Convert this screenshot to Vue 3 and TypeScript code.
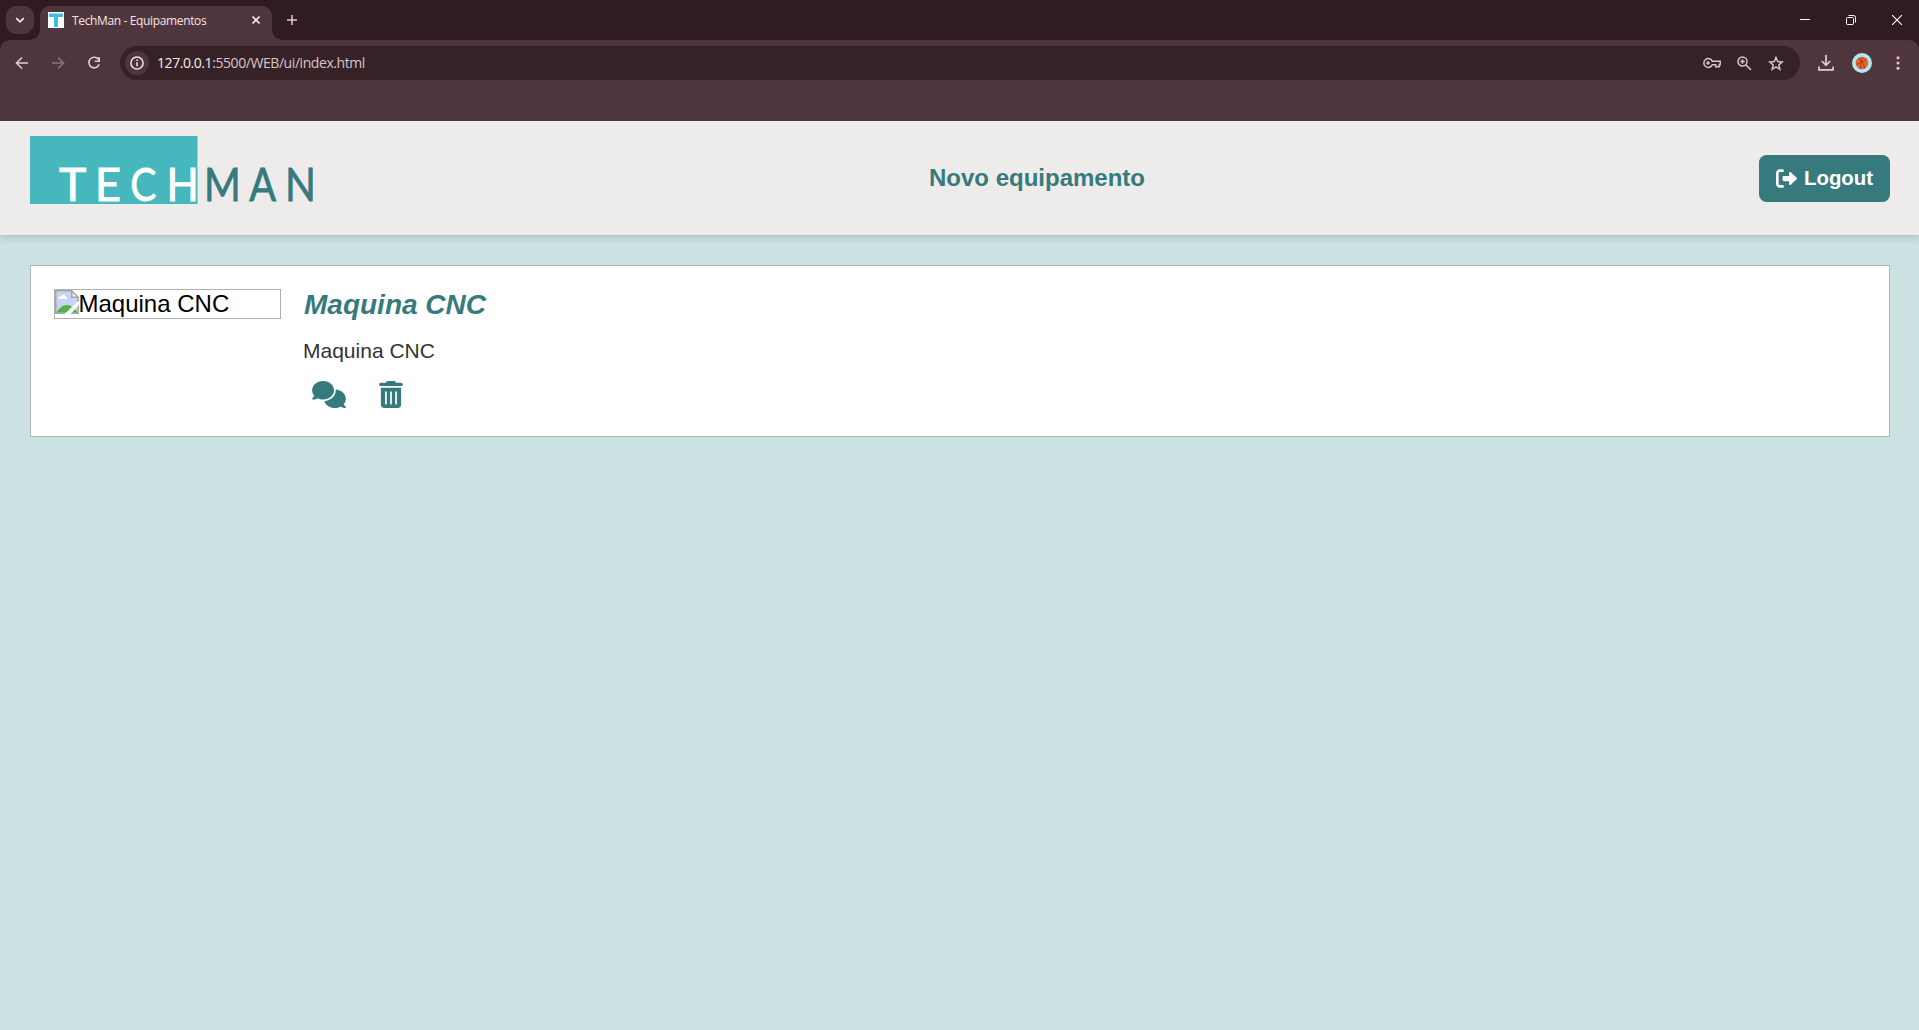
<script setup lang="ts">
interface Equipment {
  id: number
  name: string
  description: string
}

interface LogoGlyph {
  char: string
  x: number
  scale: number
  dark: boolean
}

const equipments: Equipment[] = [
  { id: 1, name: 'Maquina CNC', description: 'Maquina CNC' },
]

const logoGlyphs: LogoGlyph[] = [
  { char: 'T', x: 29.1, scale: 1.02, dark: false },
  { char: 'E', x: 64.7, scale: 1, dark: false },
  { char: 'C', x: 100.3, scale: 0.86, dark: false },
  { char: 'H', x: 136.4, scale: 0.93, dark: false },
  { char: 'M', x: 174, scale: 0.87, dark: true },
  { char: 'A', x: 219.2, scale: 0.87, dark: true },
  { char: 'N', x: 255.1, scale: 0.89, dark: true },
]
</script>

<template>
  <div class="screen">
    <div class="tabstrip">
      <button class="tab-search" aria-label="tabs">
        <svg width="10" height="8" viewBox="0 0 10 8"><path d="M1.200 2.200 5 5.800 8.800 2.200" fill="none" stroke="#f3e3e7" stroke-width="1.8" /></svg>
      </button>
      <div class="tab">
        <svg class="favicon" width="16" height="16" viewBox="0 0 16 16">
          <rect width="16" height="16" fill="#fff" />
          <rect x="1" y="1.500" width="14" height="3.500" fill="#42bde6" />
          <rect x="6" y="2" width="4" height="13" fill="#42bde6" />
        </svg>
        <span class="tab-title">TechMan - Equipamentos</span>
        <svg class="tab-close" width="8" height="8" viewBox="0 0 8 8"><path d="M.5.5 7.500 7.500M7.500.5.5 7.500" stroke="#f3e3e7" stroke-width="1.6" /></svg>
      </div>
      <svg class="new-tab" width="10" height="10" viewBox="0 0 10 10"><path d="M5 0V10M0 5H10" stroke="#e8c8d0" stroke-width="1.5" /></svg>
      <div class="window-controls">
        <svg width="10" height="10" viewBox="0 0 10 10"><path d="M0 4.500H10" stroke="#fff" /></svg>
        <svg width="10" height="10" viewBox="0 0 10 10" fill="none" stroke="#fff"><rect x=".5" y="2.500" width="7" height="7" rx="1" /><path d="M2.500.5H7.500Q9.500.5 9.500 2.500V7.500" /></svg>
        <svg width="10" height="10" viewBox="0 0 10 10"><path d="M0 0 10 10M10 0 0 10" stroke="#fff" stroke-width="1.1" /></svg>
      </div>
    </div>

    <div class="toolbar">
      <div class="nav-row">
        <svg class="nav-icon" viewBox="0 0 16 16"><path d="M14 8H3M8 2.500 2.500 8 8 13.500" /></svg>
        <svg class="nav-icon muted" viewBox="0 0 16 16"><path d="M2 8H13M8 2.500 13.500 8 8 13.500" /></svg>
        <svg class="nav-icon" viewBox="0 0 16 16"><path d="M12.700 4.700A5.300 5.300 0 1 0 13.200 9.300M13.200 2V6.200H8.700" /></svg>
        <div class="omnibox">
          <span class="site-info">
            <svg width="14" height="14" viewBox="0 0 14 14"><circle cx="7" cy="7" r="6.100" fill="none" stroke="#f3e3e7" stroke-width="1.500" /><path d="M7 6.200V10.300M7 3.600V5" stroke="#f3e3e7" stroke-width="1.500" /></svg>
          </span>
          <span class="url"><b>127.0.0.1</b>:5500/WEB/ui/index.html</span>
          <div class="omni-icons">
            <svg width="18" height="12" viewBox="0 0 18 12" fill="none" stroke="#d9c3c9" stroke-width="1.500"><path d="M9.300 4.300H17.200V7.700H16.300V9.700H12.700V7.700H9.300A4.400 4.400 0 1 1 9.300 4.300Z" /><circle cx="5" cy="6" r="1.700" fill="#d9c3c9" stroke="none" /></svg>
            <svg width="15" height="15" viewBox="0 0 15 15" fill="none" stroke="#d9c3c9" stroke-width="1.500"><circle cx="5.500" cy="5.500" r="4.500" /><path d="M9 9 14 14M5.500 3.300V7.700M3.300 5.500H7.700" /></svg>
            <svg width="16" height="15" viewBox="0 0 16 15" fill="none" stroke="#d9c3c9" stroke-width="1.500"><path d="M8 1.500 9.700 5.600 14.200 6 10.800 8.900 11.900 13.300 8 10.900 4.100 13.300 5.200 8.900 1.800 6 6.300 5.600Z" /></svg>
          </div>
        </div>
        <svg class="download" width="16" height="16" viewBox="0 0 16 16" fill="none" stroke="#e8c8d0" stroke-width="1.700"><path d="M8 0V10M3.800 6 8 10.200 12.200 6M.9 11.500V14.900H15.100V11.500" /></svg>
        <svg class="avatar" width="20" height="20" viewBox="0 0 20 20">
          <circle cx="10" cy="10" r="10" fill="#aee9f3" />
          <circle cx="10" cy="10" r="6.300" fill="#f0622b" />
          <path d="M4 11.500Q10 10.500 14.500 5.700M6 5.300Q11.500 8 12.600 15.500M10.500 4Q8 9 8.500 16" fill="none" stroke="#7a3320" stroke-width=".7" />
        </svg>
        <svg class="menu" width="4" height="14" viewBox="0 0 4 14" fill="#e8c8d0"><circle cx="2" cy="1.700" r="1.500" /><circle cx="2" cy="7" r="1.500" /><circle cx="2" cy="12.300" r="1.500" /></svg>
      </div>
    </div>

    <div class="page">
      <header class="header">
        <svg class="logo" width="300" height="84" viewBox="0 0 300 84">
          <rect width="167.500" height="68" fill="#46b7bc" />
          <text
            v-for="g in logoGlyphs"
            :key="g.char"
            :transform="`translate(${g.x} 64.800) scale(${g.scale} 1)`"
            :class="{ dark: g.dark }"
          >{{ g.char }}</text>
        </svg>
        <a class="new-link">Novo equipamento</a>
        <button class="logout">
          <svg width="21" height="21" viewBox="0 0 512 512" fill="#fff"><path d="M160 96c17.700 0 32-14.300 32-32s-14.300-32-32-32H96C43 32 0 75 0 128V384c0 53 43 96 96 96h64c17.700 0 32-14.300 32-32s-14.300-32-32-32H96c-17.700 0-32-14.300-32-32V128c0-17.700 14.300-32 32-32h64zM504.500 273.400c4.800-4.500 7.500-10.800 7.500-17.400s-2.700-12.900-7.500-17.400l-144-136c-7-6.600-17.200-8.400-26-4.600s-14.500 12.500-14.500 22v72H192c-17.700 0-32 14.300-32 32v64c0 17.700 14.300 32 32 32H320v72c0 9.600 5.700 18.200 14.500 22s19 2 26-4.600l144-136z" /></svg>
          <span>Logout</span>
        </button>
      </header>

      <main class="content">
        <article v-for="item in equipments" :key="item.id" class="card">
          <div class="thumb">
            <svg width="24" height="24" viewBox="0 0 24 24">
              <path d="M0 0H17L24 7V24H0Z" fill="#a6a6a6" />
              <path d="M1.500 1.500H16V8H22.500V22.500H1.500Z" fill="#c5d6f5" />
              <path d="M17.500 2.500V6.500H21.500Z" fill="#f4f4f4" />
              <path d="M3.500 9C3.500 6.500 6 6.700 6.300 6.300 7.300 3.800 10.300 4.400 10.500 6.500 12.300 6.700 12.300 9 12 9Z" fill="#fff" />
              <path d="M1.500 22.500C4 18 8 15 12 15S20 18 22.500 22.500Z" fill="#53b043" />
              <path d="M9.500 24 24 10.500V15L15.500 24Z" fill="#fff" />
            </svg>
            <span>{{ item.name }}</span>
          </div>
          <div class="info">
            <h2>{{ item.name }}</h2>
            <p>{{ item.description }}</p>
            <div class="actions">
              <svg width="34" height="27" viewBox="0 0 640 512"><path d="M208 352c114.900 0 208-78.800 208-176S322.900 0 208 0S0 78.800 0 176c0 38.600 14.700 74.300 39.600 103.400c-3.500 9.400-8.700 17.700-14.200 24.700c-4.800 6.200-9.700 11-13.300 14.300c-1.800 1.600-3.300 2.900-4.300 3.700c-.5 .4-.9 .7-1.100 .8l-.2 .2C1 327.200-1.400 334.400 .8 340.900S9.100 352 16 352c21.800 0 43.800-5.600 62.100-12.500c9.200-3.500 17.800-7.400 25.200-11.400C134.100 343.300 169.800 352 208 352zM448 176c0 112.300-99.100 196.900-216.500 207C255.800 457.400 336.400 512 432 512c38.200 0 73.900-8.700 104.700-23.900c7.500 4 16 7.900 25.200 11.400c18.300 6.900 40.300 12.500 62.100 12.500c6.900 0 13.100-4.500 15.200-11.100c2.100-6.600-.2-13.800-5.800-17.900l-.2-.2c-.2-.2-.6-.4-1.100-.8c-1-.8-2.500-2-4.300-3.700c-3.600-3.300-8.500-8.100-13.300-14.300c-5.500-7-10.700-15.400-14.200-24.700c24.900-29 39.600-64.700 39.600-103.400c0-92.800-84.900-168.900-192.600-175.500c.4 5.100 .6 10.300 .6 15.500z" /></svg>
              <svg width="24" height="27" viewBox="0 0 448 512"><path fill-rule="evenodd" d="M135.200 17.700C140.600 6.800 151.700 0 163.800 0H284.200c12.100 0 23.200 6.800 28.600 17.700L320 32h96c17.700 0 32 14.300 32 32s-14.300 32-32 32H32C14.300 96 0 81.700 0 64S14.300 32 32 32h96l7.200-14.300zM32 128H416V448c0 35.300-28.700 64-64 64H96c-35.300 0-64-28.700-64-64V128zm96 64c-8.800 0-16 7.200-16 16V432c0 8.800 7.200 16 16 16s16-7.200 16-16V208c0-8.800-7.200-16-16-16zm96 0c-8.800 0-16 7.200-16 16V432c0 8.800 7.200 16 16 16s16-7.200 16-16V208c0-8.800-7.200-16-16-16zm96 0c-8.800 0-16 7.200-16 16V432c0 8.800 7.200 16 16 16s16-7.200 16-16V208c0-8.800-7.200-16-16-16z" /></svg>
            </div>
          </div>
        </article>
      </main>
    </div>
  </div>
</template>

<style>
body {
  margin: 0;
  overflow: hidden;
}
</style>

<style scoped>
* {
  box-sizing: border-box;
}
.screen {
  display: flex;
  flex-direction: column;
  width: 100vw;
  height: 100vh;
  background: #2f1b20;
  font-family: "Liberation Sans", Arial, sans-serif;
}
svg {
  display: block;
  flex: none;
}
button {
  border: 0;
  padding: 0;
  font-family: inherit;
}
.tabstrip {
  display: flex;
  height: 40px;
  background: #2f1b20;
}
.tab-search {
  display: flex;
  align-items: center;
  justify-content: center;
  width: 28px;
  height: 28px;
  margin: 6px 0 0 6px;
  border-radius: 10px;
  background: #4f363c;
}
.tab {
  position: relative;
  display: flex;
  align-items: center;
  width: 232px;
  height: 34px;
  margin: 6px 0 0 6px;
  padding: 0 12px 6px 8px;
  border-radius: 10px 10px 0 0;
  background: #4f363c;
}
.tab::before,
.tab::after {
  content: "";
  position: absolute;
  bottom: 0;
  width: 10px;
  height: 10px;
}
.tab::before {
  left: -10px;
  background: radial-gradient(circle at 0 0, #2f1b20 9.500px, #4f363c 10px);
}
.tab::after {
  right: -10px;
  background: radial-gradient(circle at 100% 0, #2f1b20 9.500px, #4f363c 10px);
}
.tab-title {
  flex: 1;
  margin-left: 8px;
  padding-top: 1px;
  color: #f3e3e7;
  font: 12px/16px "Open Sans", sans-serif;
  letter-spacing: -0.36px;
  white-space: nowrap;
}
.new-tab {
  margin: 15px 0 0 15px;
}
.window-controls {
  display: flex;
  gap: 36px;
  margin: 15px 17px 0 auto;
}
.toolbar {
  height: 81px;
  border-radius: 10px 10px 0 0;
  background: #4f363c;
}
.nav-row {
  display: flex;
  align-items: center;
  height: 34px;
  margin-top: 6px;
  padding: 0 19px 0 14px;
}
.nav-icon {
  width: 16px;
  height: 16px;
  margin-right: 20px;
  fill: none;
  stroke: #e8c8d0;
  stroke-width: 1.600;
}
.nav-icon.muted {
  stroke: #8f7079;
}
.nav-icon:nth-child(3) {
  margin-right: 18px;
}
.omnibox {
  display: flex;
  flex: 1;
  align-items: center;
  height: 34px;
  padding: 0 16px 0 5px;
  border-radius: 17px;
  background: #362127;
}
.site-info {
  display: flex;
  align-items: center;
  justify-content: center;
  width: 24px;
  height: 24px;
  border-radius: 50%;
  background: #4f363c;
}
.url {
  margin-left: 8px;
  color: #d6c5ca;
  font: 14px/20px "Open Sans", sans-serif;
  letter-spacing: -0.43px;
}
.url b {
  color: #f6e9ec;
  font-weight: 400;
}
.omni-icons {
  display: flex;
  align-items: center;
  gap: 16px;
  margin-left: auto;
}
.download {
  margin-left: 18px;
}
.avatar {
  margin-left: 18px;
}
.menu {
  margin-left: 24px;
}
.page {
  flex: 1;
  background: #cce1e2;
}
.header {
  display: flex;
  align-items: flex-start;
  justify-content: space-between;
  height: 114px;
  padding: 15px 29px 0 30px;
  background: #eeecea;
  box-shadow: 0 3px 7.500px rgba(0, 0, 0, 0.14);
}
.logo text {
  fill: #fff;
  stroke: #fff;
  stroke-width: 0.800;
  font: 400 45.500px Lato, sans-serif;
}
.logo text.dark {
  fill: #377a7d;
  stroke: #377a7d;
}
.new-link {
  margin: 28px 15px 0 0;
  color: #377a7d;
  font-size: 24px;
  font-weight: 700;
  line-height: 28px;
}
.logout {
  display: flex;
  align-items: center;
  width: 131px;
  height: 47px;
  margin-top: 19px;
  padding-left: 17px;
  border-radius: 7.500px;
  background: #377a7d;
  color: #fff;
  font-size: 20.400px;
  font-weight: 700;
}
.logout span {
  margin-left: 7px;
}
.content {
  padding: 30px 29px 30px 30px;
}
.card {
  display: flex;
  gap: 22px;
  height: 172px;
  padding: 23px;
  border: 1px solid #b0b3b3;
  background: #fff;
}
.thumb {
  display: flex;
  width: 227px;
  height: 30px;
  border: 1px solid #b0b0b0;
  color: #000;
  font-size: 24px;
  line-height: 28px;
}
.thumb span {
  margin-left: -0.500px;
}
h2 {
  margin: 0 0 0 1px;
  color: #377a7d;
  font-size: 28px;
  font-style: italic;
  line-height: 31px;
}
p {
  margin: 18px 0 0;
  color: #333;
  font-size: 21px;
  line-height: 25px;
}
.actions {
  display: flex;
  gap: 33px;
  margin: 18px 0 0 9px;
  fill: #377a7d;
}
</style>
